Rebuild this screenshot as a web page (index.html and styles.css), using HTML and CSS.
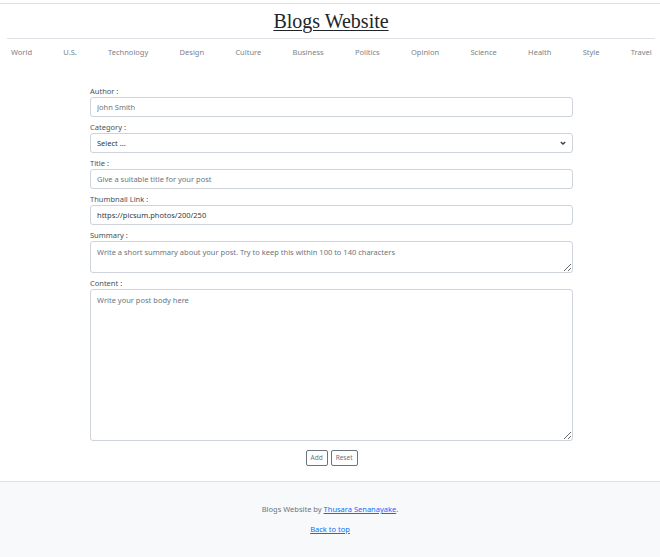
FILE: index.html
```html
<!DOCTYPE html>
<html lang="en">
<head>
<meta charset="utf-8">
<title>Blogs Website</title>
<link rel="stylesheet" href="styles.css">
</head>
<body>
<header class="site-header">
  <h1 class="brand"><a href="#" class="brand-link">Blogs Website</a></h1>
</header>
<nav class="nav-bar">
  <a class="nav-link" href="#">World</a>
  <a class="nav-link" href="#">U.S.</a>
  <a class="nav-link" href="#">Technology</a>
  <a class="nav-link" href="#">Design</a>
  <a class="nav-link" href="#">Culture</a>
  <a class="nav-link" href="#">Business</a>
  <a class="nav-link" href="#">Politics</a>
  <a class="nav-link" href="#">Opinion</a>
  <a class="nav-link" href="#">Science</a>
  <a class="nav-link" href="#">Health</a>
  <a class="nav-link" href="#">Style</a>
  <a class="nav-link" href="#">Travel</a>
</nav>
<main class="main">
  <form class="post-form">
    <div class="field">
      <label class="label">Author :</label>
      <input class="control" type="text" placeholder="John Smith">
    </div>
    <div class="field">
      <label class="label">Category :</label>
      <div class="select-wrap">
        <select class="control select">
          <option>Select ...</option>
        </select>
        <svg class="chevron" width="8" height="6" viewBox="0 0 8 6"><path d="M1.8 2 L4 4 L6.2 2" fill="none" stroke="#343a40" stroke-width="1.3"/></svg>
      </div>
    </div>
    <div class="field">
      <label class="label">Title :</label>
      <input class="control" type="text" placeholder="Give a suitable title for your post">
    </div>
    <div class="field">
      <label class="label">Thumbnail Link :</label>
      <input class="control" type="text" value="https://picsum.photos/200/250">
    </div>
    <div class="field">
      <label class="label">Summary :</label>
      <textarea class="control area-sm" placeholder="Write a short summary about your post. Try to keep this within 100 to 140 characters"></textarea>
    </div>
    <div class="field">
      <label class="label">Content :</label>
      <textarea class="control area-lg" placeholder="Write your post body here"></textarea>
    </div>
    <div class="actions">
      <button type="button" class="btn">Add</button>
      <button type="reset" class="btn">Reset</button>
    </div>
  </form>
</main>
<footer class="footer">
  <p class="footer-line">Blogs Website by <a href="#" class="footer-link">Thusara Senanayake</a>.</p>
  <p class="footer-line"><a href="#" class="footer-link">Back to top</a></p>
</footer>
</body>
</html>
```
FILE: styles.css
```css
html, body {
  margin: 0;
  padding: 0;
  background: #fff;
}
body {
  font-family: "Noto Sans", "Open Sans", sans-serif;
  color: #212529;
  padding-top: 3px;
}
.site-header {
  border-top: 1px solid #dee2e6;
}
.brand {
  margin: 0 5px 0 7px;
  height: 34px;
  border-bottom: 1px solid #dee2e6;
  display: flex;
  align-items: center;
  justify-content: center;
  font-family: "Liberation Serif", "Times New Roman", serif;
  font-weight: normal;
  font-size: 20px;
}
.brand-link {
  color: #212529;
  text-decoration: underline;
  text-underline-offset: 2px;
  text-decoration-thickness: 1px;
}
.nav-bar {
  display: flex;
  gap: 31.3px;
  padding: 0 0 0 11px;
  height: 25px;
  align-items: center;
  white-space: nowrap;
}
.nav-link {
  font-size: 7.5px;
  color: #7a828a;
  text-decoration: none;
}
.main {
  padding: 22px 87px 0 90px;
}
.post-form {
  display: flex;
  flex-direction: column;
}
.field {
  display: flex;
  flex-direction: column;
  margin-bottom: 5px;
}
.label {
  font-size: 7.5px;
  line-height: 10px;
  height: 10px;
  margin-bottom: 1px;
  color: #4a5056;
  font-weight: 400;
}
.control {
  display: block;
  box-sizing: border-box;
  width: 100%;
  height: 20px;
  margin: 0;
  padding: 0 6px;
  border: 1px solid #ced4da;
  border-radius: 3px;
  background: #fff;
  font-family: inherit;
  font-size: 7.5px;
  color: #343a40;
  outline: none;
}
.control::placeholder {
  color: #6c757d;
}
.select-wrap {
  position: relative;
  height: 20px;
}
.select {
  appearance: none;
  -webkit-appearance: none;
}
.chevron {
  position: absolute;
  right: 6px;
  top: 7px;
}
.area-sm {
  height: 32px;
  padding: 5px 6px;
  resize: vertical;
}
.area-lg {
  height: 152px;
  padding: 5px 6px;
  resize: vertical;
}
.actions {
  display: flex;
  justify-content: center;
  gap: 3px;
  margin-top: 4px;
}
.btn {
  box-sizing: border-box;
  height: 16px;
  padding: 0 4px;
  border: 1px solid #6c757d;
  border-radius: 2px;
  background: #fff;
  color: #6c757d;
  font-family: inherit;
  font-size: 6.5px;
  line-height: 14px;
}
.footer {
  margin-top: 15px;
  border-top: 1px solid #dee2e6;
  background: #f8f9fa;
  padding: 22px 0 23px;
  text-align: center;
  height: 76px;
  box-sizing: border-box;
}
.footer-line {
  margin: 0 0 10px;
  font-size: 7.5px;
  line-height: 10px;
  color: #6c757d;
}
.footer-link {
  color: #0d6efd;
  text-decoration: underline;
}
```
